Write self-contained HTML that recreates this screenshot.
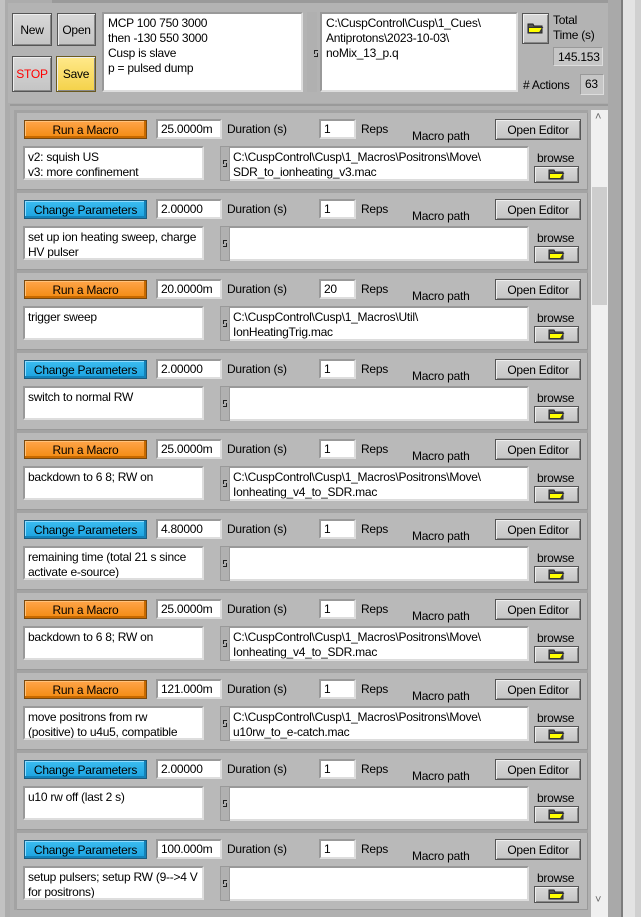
<!DOCTYPE html>
<html><head><meta charset="utf-8"><style>
*{box-sizing:border-box;margin:0;padding:0}
body{width:641px;height:917px;overflow:hidden;background:#acacac;font-family:"Liberation Sans",sans-serif;font-size:12px;letter-spacing:-0.25px;color:#000;position:relative}
.a{position:absolute}
.btn{position:absolute;border:1px solid #555;background:linear-gradient(#d8d8d8,#c4c4c4);box-shadow:inset 1px 1px 0 #eee,inset -1px -1px 0 #888;display:flex;align-items:center;justify-content:center}
.box{position:absolute;background:#fff;border:2px solid #999;border-right-color:#ddd;border-bottom-color:#ddd;line-height:15px;padding:2px 3px;white-space:pre;overflow:hidden}
.ind{position:absolute;background:#c6c6c6;border:1px solid #999;border-right-color:#ddd;border-bottom-color:#ddd;padding:2px 4px}
.row{position:absolute;left:14px;width:574px;height:80px;background:#b9b9b9;border-top:3px solid #a3a3a3;border-left:3px solid #a3a3a3;box-shadow:inset -1px -1px 0 #999}
.run{background:linear-gradient(#ffa54a,#f28a10);border:1px solid #7a4a10;box-shadow:inset -2px -2px 0 #c86a00,inset 1px 1px 0 #ffc27a}
.chg{background:linear-gradient(#3cbdf0,#1aa2e0);border:1px solid #1b5c80;box-shadow:inset -2px -2px 0 #1482b8,inset 1px 1px 0 #8fdcff}
.pi{position:absolute;width:4px;height:7px;border:1px solid #222;border-left:none;border-right:none}
.pi:before{content:"";position:absolute;left:0;top:0;width:1px;height:3px;background:#222}
.pi:after{content:"";position:absolute;right:0;bottom:0;width:1px;height:3px;background:#222}
</style></head><body>
<svg width="0" height="0" style="position:absolute"><defs><symbol id="f" viewBox="0 0 18 11"><path d="M1 1h5l1 2h8v7H1z" fill="#555" stroke="#222"/><path d="M1.5 4.5h14l-3 5h-11z" fill="#ff0" stroke="#333"/></symbol></defs></svg>
<div class="a" style="left:0;top:0;width:5px;height:917px;background:#c2c2c2"></div>
<div class="a" style="left:52px;top:0;width:560px;height:3px;background:#9a9a9a"></div>
<div class="a" style="left:8px;top:3px;width:604px;height:100px;background:#b3b3b3"></div>

<div class="btn" style="left:12px;top:13px;width:40px;height:33px">New</div>
<div class="btn" style="left:57px;top:13px;width:39px;height:33px">Open</div>
<div class="btn" style="left:12px;top:56px;width:40px;height:36px;color:#f00">STOP</div>
<div class="btn" style="left:56px;top:56px;width:40px;height:36px;background:linear-gradient(#ffe98a,#f4d24a);border-color:#6a5a20">Save</div>
<div class="box" style="left:102px;top:12px;width:201px;height:80px;padding:2px 4px">MCP 100 750 3000
then -130 550 3000
Cusp is slave
p = pulsed dump</div>
<div class="a" style="left:307px;top:12px;width:10px;height:80px;background:#b0b0b0"></div>
<div class="pi" style="left:314px;top:50px"></div>
<div class="box" style="left:320px;top:12px;width:198px;height:80px;padding:2px 4px">C:\CuspControl\Cusp\1_Cues\
Antiprotons\2023-10-03\
noMix_13_p.q</div>
<div class="btn" style="left:522px;top:13px;width:27px;height:31px"><svg width="18" height="11"><use href="#f"/></svg></div>
<div class="a" style="left:553px;top:13px;line-height:15px">Total<br>Time (s)</div>
<div class="ind" style="left:553px;top:47px;width:50px;height:19px">145.153</div>
<div class="a" style="left:523px;top:78px"># Actions</div>
<div class="ind" style="left:580px;top:74px;width:24px;height:21px">63</div>

<div class="a" style="left:10px;top:104px;width:601px;height:813px;background:#b0b0b0;border-top:2px solid #9a9a9a"></div>
<div class="a" style="left:591px;top:110px;width:17px;height:807px;background:#f0f0f0"></div>
<div class="a" style="left:592px;top:187px;width:15px;height:118px;background:#cdcdcd"></div>
<div class="a" style="left:595px;top:111px;color:#666;font-size:11px">&#708;</div>
<div class="a" style="left:595px;top:894px;color:#666;font-size:11px">&#709;</div>
<div class="a" style="left:608px;top:0;width:15px;height:917px;background:#a9a9a9;border-right:2px solid #7c7c7c"></div>
<div class="a" style="left:623px;top:0;width:12px;height:917px;background:#e3e3e3"></div>
<div class="a" style="left:635px;top:0;width:6px;height:917px;background:#d0d0d0"></div>

<div id="rows"></div>
<script>
var R=[
["r","25.0000m","1","v2: squish US\nv3: more confinement","C:\\CuspControl\\Cusp\\1_Macros\\Positrons\\Move\\\nSDR_to_ionheating_v3.mac"],
["c","2.00000","1","set up ion heating sweep, charge\nHV pulser",""],
["r","20.0000m","20","trigger sweep","C:\\CuspControl\\Cusp\\1_Macros\\Util\\\nIonHeatingTrig.mac"],
["c","2.00000","1","switch to normal RW",""],
["r","25.0000m","1","backdown to 6 8; RW on","C:\\CuspControl\\Cusp\\1_Macros\\Positrons\\Move\\\nIonheating_v4_to_SDR.mac"],
["c","4.80000","1","remaining time (total 21 s since\nactivate e-source)",""],
["r","25.0000m","1","backdown to 6 8; RW on","C:\\CuspControl\\Cusp\\1_Macros\\Positrons\\Move\\\nIonheating_v4_to_SDR.mac"],
["r","121.000m","1","move positrons from rw\n(positive) to u4u5, compatible","C:\\CuspControl\\Cusp\\1_Macros\\Positrons\\Move\\\nu10rw_to_e-catch.mac"],
["c","2.00000","1","u10 rw off (last 2 s)",""],
["c","100.000m","1","setup pulsers; setup RW (9-->4 V\nfor positrons)",""]];
var h="";
function e(s){return s.replace(/&/g,"&amp;").replace(/</g,"&lt;").replace(/>/g,"&gt;");}
R.forEach(function(r,i){var y=80*i;
h+='<div class="row" style="top:'+(110+y)+'px"></div>';
h+='<div class="btn '+(r[0]=="r"?"run":"chg")+'" style="left:24px;top:'+(120+y)+'px;width:123px;height:19px">'+(r[0]=="r"?"Run a Macro":"Change Parameters")+'</div>';
h+='<div class="box" style="left:156px;top:'+(119+y)+'px;width:66px;height:20px;padding:1px 3px">'+r[1]+'</div>';
h+='<div class="a" style="left:227px;top:'+(122+y)+'px">Duration (s)</div>';
h+='<div class="box" style="left:319px;top:'+(119+y)+'px;width:37px;height:20px;padding:1px 3px">'+r[2]+'</div>';
h+='<div class="a" style="left:361px;top:'+(122+y)+'px">Reps</div>';
h+='<div class="a" style="left:412px;top:'+(129+y)+'px">Macro path</div>';
h+='<div class="btn" style="left:495px;top:'+(119+y)+'px;width:86px;height:21px">Open Editor</div>';
h+='<div class="box" style="left:23px;top:'+(146+y)+'px;width:181px;height:34px">'+e(r[3])+'</div>';
h+='<div class="a" style="left:220px;top:'+(146+y)+'px;width:10px;height:35px;background:#b0b0b0;border:1px solid #999"></div>';
h+='<div class="pi" style="left:223px;top:'+(160+y)+'px"></div>';
h+='<div class="box" style="left:230px;top:'+(146+y)+'px;width:299px;height:35px;border-left:none">'+e(r[4])+'</div>';
h+='<div class="a" style="left:537px;top:'+(151+y)+'px">browse</div>';
h+='<div class="btn" style="left:534px;top:'+(166+y)+'px;width:45px;height:17px"><svg width="18" height="11"><use href="#f"/></svg></div>';
});
document.getElementById("rows").innerHTML=h;
</script>
</body></html>
